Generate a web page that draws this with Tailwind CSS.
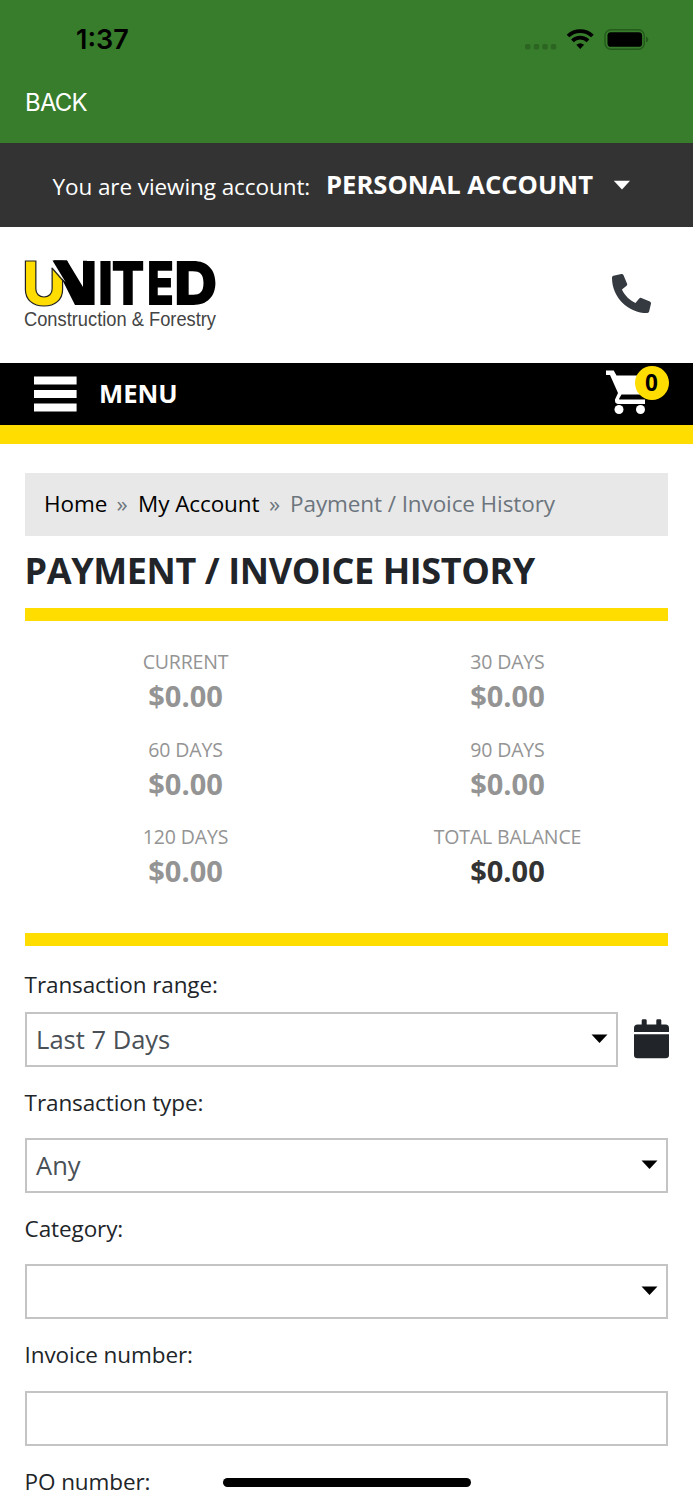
<!DOCTYPE html>
<html lang="en">
<head>
<meta charset="utf-8">
<title>Payment / Invoice History</title>
<script src="https://cdn.jsdelivr.net/npm/@tailwindcss/browser@4"></script>
</head>
<body class="bg-white">
<div class="relative w-[693px] h-[1500px] overflow-hidden bg-white text-[#212529] font-['Open_Sans',sans-serif]">
  <header class="h-[143px] bg-[#377d2b] flex flex-col">
    <div class="h-[79px] flex items-center justify-between pl-[76px] pr-[43px] font-['Inter',sans-serif]">
      <span class="text-[27px] font-semibold text-black pt-[2px]">1:37</span>
      <svg width="125" height="30" viewBox="0 0 125 30" aria-hidden="true">
        <g fill="#2c6422"><rect x="0" y="19" width="5.5" height="5.5" rx="1.8"/><rect x="8.700" y="19" width="5.5" height="5.5" rx="1.8"/><rect x="17.300" y="19" width="5.5" height="5.5" rx="1.8"/><rect x="25.800" y="19" width="5.5" height="5.5" rx="1.8"/></g>
        <g fill="none" stroke="#000" stroke-width="3.8"><path d="M43 11A17.6 17.6 0 0 1 67.400 11"/><path d="M47.400 15.800A11.400 11.400 0 0 1 63 15.800"/></g>
        <path d="M51.300 19.800A6.200 6.200 0 0 1 59.100 19.800L55.200 24Z"/>
        <rect x="80" y="4.700" width="39.300" height="19.600" rx="6" fill="none" stroke="#245a1c" stroke-width="1.400"/>
        <rect x="82.500" y="7.200" width="34.600" height="14.600" rx="3.400"/>
        <path d="M121 11.500Q123.300 12.300 123.300 14.500T121 17.500Z" fill="#245a1c"/>
      </svg>
    </div>
    <div class="h-[48px] px-[25px] flex items-center text-[24px] tracking-[-0.8px] text-white font-['Inter',sans-serif]">BACK</div>
  </header>
  <div class="h-[84px] bg-[#333] text-white flex items-center pl-[52.500px]">
    <span class="w-[273.500px] pt-[3px] text-[22.500px] tracking-[-0.080px] whitespace-nowrap">You are viewing account:</span>
    <span class="w-[287px] pt-px text-[25.600px] font-bold whitespace-nowrap">PERSONAL ACCOUNT</span>
    <svg width="18" height="10" viewBox="0 0 18 10" fill="#fff"><path d="M.8.7H17L9 9.5Z"/></svg>
  </div>
  <div class="h-[136px] flex items-start justify-between pl-6 pr-[42px]">
    <svg class="mt-[31px] overflow-visible" width="194" height="76" viewBox="0 0 194 76" role="img" aria-label="United Construction &amp; Forestry">
      <g font-family="Inter, sans-serif" font-weight="900" font-size="61">
        <text x="41" y="47" textLength="31.500" lengthAdjust="spacingAndGlyphs">N</text>
        <path d="M36 0H62V49H36Z" fill="#fff"/>
        <path d="M28.500 2.500H43L59 29V2.700H63V47H51Z"/>
        <text x="74" y="47" textLength="15" lengthAdjust="spacingAndGlyphs">I</text>
        <text x="87.500" y="47" textLength="33" lengthAdjust="spacingAndGlyphs">T</text>
        <text x="123" y="47" textLength="27" lengthAdjust="spacingAndGlyphs">E</text>
        <text x="150" y="47" textLength="43.500" lengthAdjust="spacingAndGlyphs">D</text>
        <text x="-2" y="46.500" font-size="60" font-weight="800" textLength="44" lengthAdjust="spacingAndGlyphs" fill="#fd0" stroke="#222" stroke-width="1.200">U</text>
        <path d="M25 0H28.200L41.500 20V24L25 7Z" fill="#fff"/>
        <path d="M28.500 2.500H43L46 10L43 26.500Z"/>
        <path d="M28 10L38.800 22.500" stroke="#222" stroke-width="1.200"/>
      </g>
      <text x="0" y="68" font-family="Liberation Sans, sans-serif" font-size="20" textLength="192" lengthAdjust="spacingAndGlyphs" fill="#444">Construction &amp; Forestry</text>
    </svg>
    <svg class="mt-[47px]" width="39" height="39" viewBox="0 0 512 512" fill="#343a40"><path d="M493.400 24.600l-104-24c-11.300-2.600-22.900 3.300-27.500 13.900l-48 112c-4.200 9.800-1.400 21.300 6.900 28l60.600 49.600c-36 76.700-98.900 140.500-177.200 177.200l-49.600-60.600c-6.800-8.300-18.200-11.100-28-6.900l-112 48C3.900 366.500-2 378.100.600 389.400l24 104C27.100 504.200 36.700 512 48 512c256.100 0 464-207.500 464-464 0-11.200-7.700-20.900-18.600-23.400z" transform="matrix(-1 0 0 1 512 0)"/></svg>
  </div>
  <nav class="h-[81px] bg-black border-b-[19px] border-[#fd0] flex items-start justify-between pl-[34px] pr-[24px]">
    <div class="flex items-center gap-[22px] h-[62px]">
      <svg width="43" height="36" viewBox="0 0 43 36" fill="#fff"><path d="M0 .4h42.600v8H0zM0 14h42.600v8H0zM0 27.400h42.600v8H0z"/></svg>
      <span class="text-[25.600px] pt-px font-bold text-white">MENU</span>
    </div>
    <div class="relative w-[63px] h-[54px]">
      <svg class="absolute left-0 top-[4px]" width="44" height="48" viewBox="0 0 44 48"><path d="M0 3.500H7.700L10.500 8.500H43V14L35.500 27.500H15.500L13.200 31.500V32.600H39V37H12Q8.500 36.500 9 32.500L12 26L4 8H0Z" fill="#fff"/><circle cx="13" cy="42.500" r="4.500" fill="#fff"/><circle cx="34.500" cy="42.500" r="4.500" fill="#fff"/></svg>
      <span class="absolute left-[28.500px] top-[3px] size-[34px] rounded-full bg-[#fd0] text-black text-[22.500px] font-bold flex items-center justify-center">0</span>
    </div>
  </nav>
  <main class="px-[24.600px] pt-[29px]">
    <div class="h-[63px] bg-[#e8e8e8] flex items-center pb-[2px] pl-[19.500px] text-[22.500px] tracking-[-0.100px] whitespace-nowrap">
      <span class="w-[72.500px] text-black">Home</span><span class="w-[21.500px] text-[#6c757d]">»</span><span class="w-[131px] text-black">My Account</span><span class="w-[21px] text-[#6c757d]">»</span><span class="text-[#6c757d]">Payment / Invoice History</span>
    </div>
    <h1 class="h-[71.600px] leading-[69px] text-[36px] tracking-[-0.400px] font-bold whitespace-nowrap">PAYMENT / INVOICE HISTORY</h1>
    <section class="h-[338.400px] border-y-[13px] border-[#fd0] grid grid-cols-2 auto-rows-[87.500px] pt-[26.500px] text-center text-[#949494]">
      <div><p class="text-[19.500px] tracking-[-0.150px] leading-[30px]">CURRENT</p><p class="text-[29px] leading-[37px] font-bold">$0.00</p></div>
      <div><p class="text-[19.500px] tracking-[-0.150px] leading-[30px]">30 DAYS</p><p class="text-[29px] leading-[37px] font-bold">$0.00</p></div>
      <div><p class="text-[19.500px] tracking-[-0.150px] leading-[30px]">60 DAYS</p><p class="text-[29px] leading-[37px] font-bold">$0.00</p></div>
      <div><p class="text-[19.500px] tracking-[-0.150px] leading-[30px]">90 DAYS</p><p class="text-[29px] leading-[37px] font-bold">$0.00</p></div>
      <div><p class="text-[19.500px] tracking-[-0.150px] leading-[30px]">120 DAYS</p><p class="text-[29px] leading-[37px] font-bold">$0.00</p></div>
      <div><p class="text-[19.500px] tracking-[-0.150px] leading-[30px]">TOTAL BALANCE</p><p class="text-[29px] leading-[37px] font-bold text-[#333]">$0.00</p></div>
    </section>
    <form class="text-[22.500px] tracking-[-0.100px]">
      <label class="block h-[66px] leading-[77px]">Transaction range:</label>
      <div class="flex items-center justify-between">
        <div class="w-[593.500px] h-[55px] border-2 border-[#c4c4c4] flex items-center justify-between pl-[9.500px] pr-[8.500px] text-[25.500px] tracking-normal text-[#495057]"><span>Last 7 Days</span><svg class="mb-px" width="17" height="10" viewBox="0 0 17 10" fill="#000"><path d="M.5.500H16.500L8.500 9Z"/></svg></div>
        <svg class="relative left-[0.500px]" width="35" height="40" viewBox="0 0 35 40" fill="#212529"><path d="M0 13V9Q0 5.500 3.500 5.500H7.700V1.500Q7.700.300 9 .300H11.500Q12.700.300 12.700 1.500V5.500H22.300V1.500Q22.300.300 23.500 .300H26Q27.300.300 27.300 1.500V5.500H31.500Q35 5.500 35 9V13ZM0 15.200H35V36Q35 39.300 31.500 39.300H3.500Q0 39.300 0 36Z"/></svg>
      </div>
      <label class="block h-[71px] leading-[71px]">Transaction type:</label>
      <div class="h-[55px] border-2 border-[#c4c4c4] flex items-center justify-between pl-[9.500px] pr-[8.500px] text-[25.500px] tracking-normal text-[#495057]"><span>Any</span><svg class="mb-px" width="17" height="10" viewBox="0 0 17 10" fill="#000"><path d="M.5.500H16.500L8.500 9Z"/></svg></div>
      <label class="block h-[71.400px] leading-[72px]">Category:</label>
      <div class="h-[55px] border-2 border-[#c4c4c4] flex items-center justify-end pr-[8.500px]"><svg class="mb-px" width="17" height="10" viewBox="0 0 17 10" fill="#000"><path d="M.5.500H16.500L8.500 9Z"/></svg></div>
      <label class="block h-[71.400px] leading-[71px]">Invoice number:</label>
      <div class="h-[55px] border-2 border-[#c4c4c4]"></div>
      <label class="block leading-[71px]">PO number:</label>
    </form>
  </main>
  <div class="absolute left-[223px] top-[1478px] w-[248px] h-[9px] rounded-full bg-black"></div>
</div>
</body>
</html>
